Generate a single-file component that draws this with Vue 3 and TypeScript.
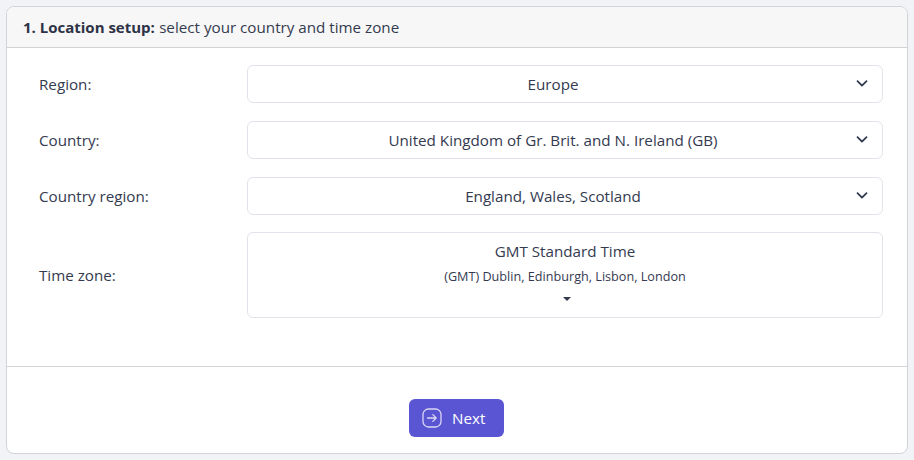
<script setup lang="ts">
const selects = [
  { label: 'Region:', value: 'Europe' },
  { label: 'Country:', value: 'United Kingdom of Gr. Brit. and N. Ireland (GB)' },
  { label: 'Country region:', value: 'England, Wales, Scotland' }
];
</script>

<template>
  <div class="page">
    <section class="card">
      <header class="card-header"><strong>1. Location setup:</strong> select your country and time zone</header>
      <div class="card-body">
        <div v-for="item in selects" :key="item.label" class="row">
          <label class="row-label">{{ item.label }}</label>
          <div class="select">
            <span>{{ item.value }}</span>
            <svg class="chevron" width="16" height="16" viewBox="0 0 16 16" fill="none">
              <path d="M3.5 6.2 8 10.6l4.5-4.4" stroke="#343a4f" stroke-width="1.8" stroke-linecap="round" stroke-linejoin="round" />
            </svg>
          </div>
        </div>
        <div class="row">
          <label class="row-label">Time zone:</label>
          <div class="zone">
            <div class="zone-name">GMT Standard Time</div>
            <div class="zone-cities">(GMT) Dublin, Edinburgh, Lisbon, London</div>
            <span class="caret"></span>
          </div>
        </div>
      </div>
      <footer class="card-footer">
        <button class="next" type="button">
          <svg width="20" height="20" viewBox="0 0 20 20" fill="none" stroke="#d9d7f4" stroke-width="1.3" stroke-linecap="round" stroke-linejoin="round">
            <rect x="1" y="1" width="18" height="18" rx="5.5" />
            <path d="M5.5 10h8.5M10.8 6.6 14.2 10l-3.4 3.4" />
          </svg>
          <span>Next</span>
        </button>
      </footer>
    </section>
  </div>
</template>

<style>
html,
body {
  margin: 0;
  background: #f1f3f7;
}
</style>

<style scoped>
.page {
  height: 460px;
  box-sizing: border-box;
  padding: 6px;
  font-family: "Open Sans", "Noto Sans", sans-serif;
  font-size: 15.2px;
  color: #343a4f;
}

.card {
  height: 448px;
  box-sizing: border-box;
  display: flex;
  flex-direction: column;
  background: #fff;
  border: 1px solid #d2d3d7;
  border-radius: 8px;
  overflow: hidden;
}

.card-header {
  height: 41px;
  box-sizing: border-box;
  padding: 0 16px;
  display: flex;
  align-items: center;
  gap: 0.28em;
  background: #f7f7f8;
  border-bottom: 1px solid #d2d3d7;
}

.card-header strong {
  font-size: 15px;
  color: #2d3245;
}

.card-body {
  height: 319px;
  box-sizing: border-box;
  padding: 17px 24px 0 32px;
  display: flex;
  flex-direction: column;
  gap: 18px;
  border-bottom: 1px solid #d2d3d7;
}

.row {
  display: flex;
  align-items: center;
}

.row:last-child {
  margin-top: -1px;
}

.row-label {
  width: 208px;
  flex: none;
}

.select {
  position: relative;
  flex: 1;
  height: 38px;
  box-sizing: border-box;
  padding: 0 36px 0 12px;
  display: flex;
  align-items: center;
  justify-content: center;
  border: 1px solid #e0e3ea;
  border-radius: 6px;
}

.chevron {
  position: absolute;
  right: 12px;
  top: 9px;
}

.zone {
  flex: 1;
  height: 86px;
  box-sizing: border-box;
  display: flex;
  flex-direction: column;
  align-items: center;
  border: 1px solid #e0e3ea;
  border-radius: 6px;
  padding-top: 8px;
}

.zone-name {
  line-height: 20px;
}

.zone-cities {
  margin-top: 5px;
  font-size: 12.65px;
  line-height: 20px;
}

.caret {
  margin: 11px 0 0 4px;
  border-top: 4px solid #343a4f;
  border-left: 4px solid transparent;
  border-right: 4px solid transparent;
}

.card-footer {
  flex: 1;
  display: flex;
  justify-content: center;
  padding: 32px 1px 0 0;
}

.next {
  width: 95px;
  height: 38px;
  display: flex;
  align-items: center;
  gap: 10px;
  padding: 0 0 0 13px;
  border: none;
  border-radius: 6px;
  background: #5a55d2;
  color: #fff;
  font: inherit;
}
</style>
